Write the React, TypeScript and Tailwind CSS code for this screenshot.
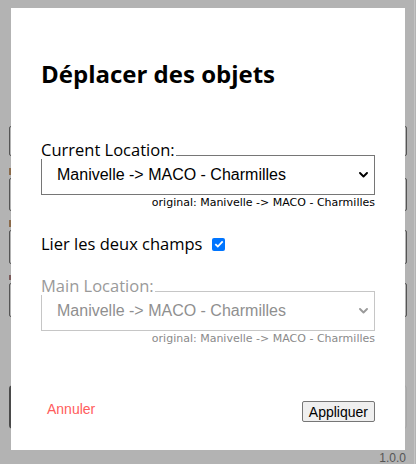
import React from "react";

const Chevron = ({ color }: { color: string }) => (
  <svg width="9" height="6" viewBox="0 0 9 6" className="shrink-0">
    <path d="M1 1 L4.5 4.5 L8 1" fill="none" stroke={color} strokeWidth="1.9" strokeLinecap="round" strokeLinejoin="round" />
  </svg>
);

function Field({ label, disabled }: { label: string; disabled?: boolean }) {
  return (
    <div className="flex flex-col">
      <div
        className={`relative z-10 w-fit bg-white pr-[1px] text-[16.5px] leading-[19px] -mb-[4px] ${
          disabled ? "text-[#9a9a9a]" : "text-black"
        }`}
        style={{ fontFamily: "'Open Sans', 'Noto Sans', sans-serif" }}
      >
        {label}
      </div>
      <div
        className={`flex h-[40px] items-center justify-between border pl-[15px] pr-[6px] ${
          disabled ? "border-[#c6c6c6] text-[#8f8f8f]" : "border-[#767676] text-black"
        }`}
        style={{ fontFamily: "'Liberation Sans', Arial, sans-serif" }}
      >
        <span className="text-[16px]">Manivelle -&gt; MACO - Charmilles</span>
        <Chevron color={disabled ? "#9a9a9a" : "#000"} />
      </div>
      <div
        className={`mt-[1px] text-right text-[11px] leading-[14px] ${disabled ? "text-[#8a8a8a]" : "text-black"}`}
        style={{ fontFamily: "'DejaVu Sans', Verdana, sans-serif" }}
      >
        original: Manivelle -&gt; MACO - Charmilles
      </div>
    </div>
  );
}

export default function App() {
  return (
    <div className="relative h-[464px] w-[416px] overflow-hidden bg-[#b3b3b3]">
      {/* underlying page glimpses */}
      <div className="absolute left-[9px] top-[126px] h-[30px] w-[398px] rounded-[2px] border border-[#555]" />
      <div className="absolute left-[9px] top-[178px] h-[33px] w-[398px] rounded-[2px] border border-[#555]" />
      <div className="absolute left-[9px] top-[230px] h-[34px] w-[398px] rounded-[2px] border border-[#555]" />
      <div className="absolute left-[9px] top-[283px] h-[34px] w-[398px] rounded-[2px] border border-[#555]" />
      <div className="absolute left-[9px] top-[168px] h-[7px] w-[3px] bg-[#8a6a4a]" />
      <div className="absolute left-[9px] top-[220px] h-[7px] w-[3px] bg-[#8a6a4a]" />
      <div className="absolute left-[9px] top-[275px] h-[5px] w-[3px] bg-[#7a5a5a]" />
      <div className="absolute left-[9px] top-[385px] h-[44px] w-[398px] rounded-[4px] border-l-[3px] border-[#4a4a4a] border-y border-y-[#a8a8a8] border-r border-r-[#a8a8a8]" />
      <div className="absolute right-[1px] top-[0px] h-[464px] w-[1px] bg-[#c4c4c4]" />
      <div
        className="absolute right-[10px] top-[453px] text-[12px] leading-[11px] text-[#555]"
        style={{ fontFamily: "'Liberation Sans', Arial, sans-serif" }}
      >
        1.0.0
      </div>

      {/* modal */}
      <div className="absolute left-[11px] top-[8px] flex h-[442px] w-[394px] flex-col bg-white px-[30px] pt-[50px]">
        <h1
          className="text-[24px] font-bold leading-[32px] text-black"
          style={{ fontFamily: "'Open Sans', 'Noto Sans', sans-serif" }}
        >
          Déplacer des objets
        </h1>

        <div className="mt-[50px]">
          <Field label="Current Location:" />
        </div>

        <label
          className="mt-[24px] flex items-center gap-[10px] text-[16.5px] leading-[20px] text-black"
          style={{ fontFamily: "'Open Sans', 'Noto Sans', sans-serif" }}
        >
          Lier les deux champs
          <span className="flex h-[13px] w-[13px] items-center justify-center rounded-[2px] bg-[#0075ff]">
            <svg width="10" height="8" viewBox="0 0 10 8">
              <path d="M1.3 4.2 L3.8 6.5 L8.7 1.3" fill="none" stroke="#fff" strokeWidth="1.8" />
            </svg>
          </span>
        </label>

        <div className="mt-[22px]">
          <Field label="Main Location:" disabled />
        </div>

        <div className="mt-[53px] flex items-center justify-between" style={{ fontFamily: "'Liberation Sans', Arial, sans-serif" }}>
          <span className="mb-[4px] pl-[6px] text-[14px] text-[#ff5c5c]">Annuler</span>
          <button className="h-[21px] rounded-[2px] border border-[#767676] bg-[#efefef] px-[6px] text-[14px] leading-[16px] text-black">
            Appliquer
          </button>
        </div>
      </div>
    </div>
  );
}
